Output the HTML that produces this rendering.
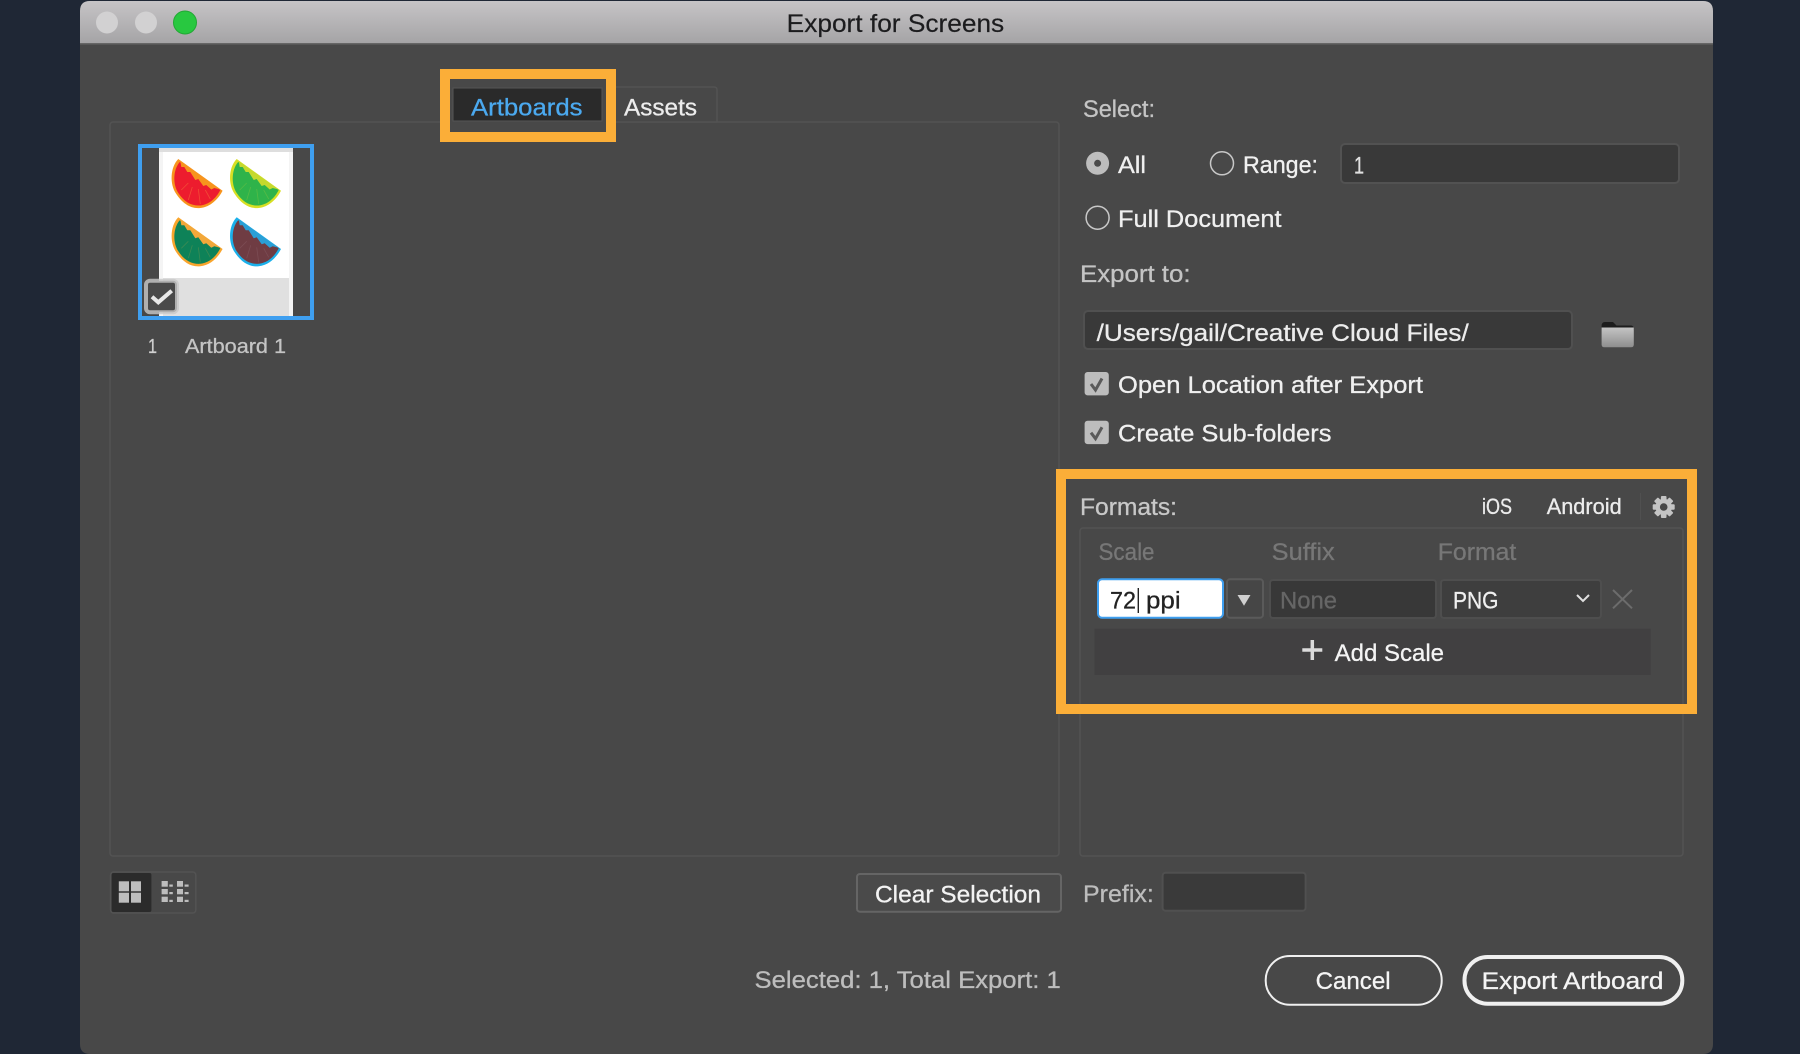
<!DOCTYPE html>
<html lang="en">
<head>
<meta charset="utf-8">
<title>Export for Screens</title>
<style>
html,body{margin:0;padding:0;width:1800px;height:1054px;overflow:hidden;background:#1f2735}
svg{display:block}
text{font-family:"Liberation Sans",sans-serif;font-size:24px;fill:currentColor;stroke:currentColor;stroke-width:.3px}
</style>
</head>
<body>
<svg xmlns="http://www.w3.org/2000/svg" width="1800" height="1054" viewBox="0 0 1800 1054">
<defs>
<linearGradient id="tb" x1="0" y1="0" x2="0" y2="1"><stop offset="0" stop-color="#c6c4c6"/><stop offset="1" stop-color="#a5a4a6"/></linearGradient>
<linearGradient id="fd" x1="0" y1="0" x2="0" y2="1"><stop offset="0" stop-color="#c4c4c4"/><stop offset="1" stop-color="#8e8e8e"/></linearGradient>
</defs>
<rect width="1800" height="1054" fill="#1f2735"/>
<!-- window -->
<path d="M80 1044V11Q80 1 90 1H1703Q1713 1 1713 11V1044Q1713 1054 1703 1054H90Q80 1054 80 1044Z" fill="#484848"/>
<path d="M80 43V11Q80 1 90 1H1703Q1713 1 1713 11V43Z" fill="url(#tb)"/>
<rect x="80" y="43" width="1633" height="1.5" fill="#666"/>
<circle cx="107" cy="22.5" r="11" fill="#d2d1d2"/>
<circle cx="146" cy="22.5" r="11" fill="#d2d1d2"/>
<circle cx="185" cy="22.5" r="11.5" fill="#28c840" stroke="#22a834" stroke-width="1"/>
<text x="786.7" y="32" color="#1c1c1e" style="font-size:25px;stroke-width:.2px" textLength="217.5" lengthAdjust="spacingAndGlyphs">Export for Screens</text>

<!-- left panel -->
<rect x="110" y="122" width="949" height="734" rx="3" fill="#484848" stroke="#535353" stroke-width="1.5"/>
<!-- tabs -->
<path d="M606 87H714Q717 87 717 90V122H606Z" fill="#484848" stroke="#535353" stroke-width="1.5"/>
<rect x="445" y="74" width="166" height="63" fill="#484848" stroke="#fbae38" stroke-width="10"/>
<rect x="453" y="88" width="149" height="33" fill="#2a2a2a" stroke="#555" stroke-width="1"/>
<text x="471" y="115.5" style="font-size:24.5px" color="#4ba9ef" textLength="111.5" lengthAdjust="spacingAndGlyphs">Artboards</text>
<text x="624" y="115.5" style="font-size:24.5px" color="#ececec" textLength="73" lengthAdjust="spacingAndGlyphs">Assets</text>

<!-- thumbnail -->
<rect x="140" y="146" width="172" height="172" fill="#484848" stroke="#3f9ff0" stroke-width="4"/>
<rect x="159" y="148" width="134" height="168" fill="#f4f4f4"/>
<rect x="159" y="148" width="134" height="4" fill="#dedede"/>
<rect x="163" y="152" width="126" height="126" fill="#fff"/>
<rect x="163" y="278" width="126" height="38" fill="#e0e0e0"/>
<g transform="translate(178.3,159)">
<path d="M0 0C-8 8-9 25-2 35C4 44 12 50 22 49C32 48 40 40 44.3 31.7Z" fill="#f7941d"/>
<path d="M1.500 3C-5 10-6 25 0 34C6 43 13 47 22 46.500C31 45.500 38 39 42 31Z" fill="#ed1c2e"/>
<path d="M2 2L42 30.500L36 29L33 30.500L28 26L25 27L20 20L17 21L12 13L9 13L6 8L3 8Z" fill="#f7941d"/>
<path d="M22 45L20 30M10 41L14 28M3 31L10 24M32 40L27 31" stroke="#f36b3b" stroke-width=".8" stroke-opacity=".6" fill="none"/>
</g>
<g transform="translate(236.7,159)">
<path d="M0 0C-8 8-9 25-2 35C4 44 12 50 22 49C32 48 40 40 44.3 31.7Z" fill="#d7df23"/>
<path d="M1.500 3C-5 10-6 25 0 34C6 43 13 47 22 46.500C31 45.500 38 39 42 31Z" fill="#2fb34a"/>
<path d="M2 2L42 30.500L36 29L33 30.500L28 26L25 27L20 20L17 21L12 13L9 13L6 8L3 8Z" fill="#c5d92d"/>
<path d="M22 45L20 30M10 41L14 28M3 31L10 24M32 40L27 31" stroke="#6cbf45" stroke-width=".8" stroke-opacity=".6" fill="none"/>
</g>
<g transform="translate(178.3,217.3)">
<path d="M0 0C-8 8-9 25-2 35C4 44 12 50 22 49C32 48 40 40 44.3 31.7Z" fill="#f9a52c"/>
<path d="M1.500 3C-5 10-6 25 0 34C6 43 13 47 22 46.500C31 45.500 38 39 42 31Z" fill="#0e8258"/>
<path d="M2 2L42 30.500L36 29L33 30.500L28 26L25 27L20 20L17 21L12 13L9 13L6 8L3 8Z" fill="#f2a83a"/>
<path d="M22 45L20 30M10 41L14 28M3 31L10 24M32 40L27 31" stroke="#5a9050" stroke-width=".8" stroke-opacity=".6" fill="none"/>
</g>
<g transform="translate(236.7,217.3)">
<path d="M0 0C-8 8-9 25-2 35C4 44 12 50 22 49C32 48 40 40 44.3 31.7Z" fill="#1bb0ea"/>
<path d="M1.500 3C-5 10-6 25 0 34C6 43 13 47 22 46.500C31 45.500 38 39 42 31Z" fill="#6f3c43"/>
<path d="M2 2L42 30.500L36 29L33 30.500L28 26L25 27L20 20L17 21L12 13L9 13L6 8L3 8Z" fill="#2a9fd6"/>
<path d="M22 45L20 30M10 41L14 28M3 31L10 24M32 40L27 31" stroke="#84575f" stroke-width=".8" stroke-opacity=".6" fill="none"/>
</g>
<rect x="146" y="280.700" width="31" height="31.500" rx="4" fill="#4a4a4a" stroke="#c9c9c9" stroke-opacity=".8" stroke-width="4"/>
<path d="M152 296.700L158.300 302.300L171.700 290.700" fill="none" stroke="#e8e8e8" stroke-width="4"/>
<text x="148" y="353" style="font-size:20.5px" color="#d0d0d0" textLength="9" lengthAdjust="spacingAndGlyphs">1</text>
<text x="185" y="353" style="font-size:20.5px" color="#c4c4c4" textLength="101" lengthAdjust="spacingAndGlyphs">Artboard 1</text>

<!-- select -->
<text x="1083" y="117" color="#c4c4c4" textLength="72" lengthAdjust="spacingAndGlyphs">Select:</text>
<circle cx="1097.600" cy="163.300" r="11.500" fill="#bdbdbd"/>
<circle cx="1097.600" cy="163.300" r="3.500" fill="#4a4a4a"/>
<text x="1118" y="172.800" color="#f0f0f0" textLength="28" lengthAdjust="spacingAndGlyphs">All</text>
<circle cx="1222" cy="163.300" r="11.500" fill="#484848" stroke="#c8c8c8" stroke-width="1.500"/>
<text x="1243" y="172.800" color="#f0f0f0" textLength="75" lengthAdjust="spacingAndGlyphs">Range:</text>
<rect x="1341" y="144" width="338" height="39" rx="4" fill="#393939" stroke="#525252" stroke-width="2"/>
<text x="1354" y="173.500" color="#e0e0e0" textLength="10" lengthAdjust="spacingAndGlyphs">1</text>
<circle cx="1097.600" cy="217.700" r="11.500" fill="#484848" stroke="#c8c8c8" stroke-width="1.500"/>
<text x="1118" y="226.800" color="#f0f0f0" textLength="163.500" lengthAdjust="spacingAndGlyphs">Full Document</text>

<!-- export to -->
<text x="1080" y="282" color="#c4c4c4" textLength="110.500" lengthAdjust="spacingAndGlyphs">Export to:</text>
<rect x="1084" y="311" width="488" height="38" rx="4" fill="#393939" stroke="#505050" stroke-width="2"/>
<text x="1096.700" y="341" color="#ececec" textLength="372" lengthAdjust="spacingAndGlyphs">/Users/gail/Creative Cloud Files/</text>
<path d="M1601.600 326Q1601.600 322 1605 322H1613L1616.500 325.500H1631Q1633.800 325.500 1633.800 329V330H1601.600Z" fill="#1d1d1d"/>
<path d="M1601.600 327.500H1633.800V344.500Q1633.800 347.300 1631 347.300H1604.400Q1601.600 347.300 1601.600 344.500Z" fill="url(#fd)"/>
<rect x="1084.600" y="372" width="24.200" height="23.400" rx="3" fill="#bdbdbd"/>
<path d="M1091 384L1095.500 390L1102 378.500" fill="none" stroke="#5a5a5a" stroke-width="3"/>
<text x="1118" y="392.800" color="#f0f0f0" textLength="305" lengthAdjust="spacingAndGlyphs">Open Location after Export</text>
<rect x="1084.600" y="420.700" width="24.200" height="23.400" rx="3" fill="#bdbdbd"/>
<path d="M1091 432.700L1095.500 438.700L1102 427.200" fill="none" stroke="#5a5a5a" stroke-width="3"/>
<text x="1118" y="441.500" color="#f0f0f0" textLength="213.500" lengthAdjust="spacingAndGlyphs">Create Sub-folders</text>

<!-- formats -->
<rect x="1080" y="528" width="603" height="328" rx="3" fill="#484848" stroke="#535353" stroke-width="1.5"/>
<rect x="1061" y="474" width="631" height="235" fill="none" stroke="#fbae38" stroke-width="10"/>
<text x="1080" y="515" color="#c8c8c8" textLength="97" lengthAdjust="spacingAndGlyphs">Formats:</text>
<text x="1482" y="514" style="font-size:22px" color="#ececec" textLength="30" lengthAdjust="spacingAndGlyphs">iOS</text>
<text x="1546.700" y="514" style="font-size:22px" color="#ececec" textLength="75" lengthAdjust="spacingAndGlyphs">Android</text>
<rect x="1640" y="493" width="1" height="27" fill="#505050"/>
<g transform="translate(1663.700,507)" fill="#c4c4c4">
<rect x="-2.800" y="-11" width="5.600" height="22" rx="1"/>
<rect x="-2.800" y="-11" width="5.600" height="22" rx="1" transform="rotate(45)"/>
<rect x="-2.800" y="-11" width="5.600" height="22" rx="1" transform="rotate(90)"/>
<rect x="-2.800" y="-11" width="5.600" height="22" rx="1" transform="rotate(135)"/>
<circle r="8.200"/>
<circle r="3.800" fill="#484848"/>
</g>
<text x="1098.500" y="560" color="#777" textLength="56" lengthAdjust="spacingAndGlyphs">Scale</text>
<text x="1271.700" y="560" color="#777" textLength="63" lengthAdjust="spacingAndGlyphs">Suffix</text>
<text x="1437.800" y="560" color="#777" textLength="78.500" lengthAdjust="spacingAndGlyphs">Format</text>
<rect x="1098" y="579.300" width="125" height="38.400" rx="4" fill="#fff" stroke="#3f9ff0" stroke-width="2"/>
<text x="1110" y="608.500" color="#222" textLength="26" lengthAdjust="spacingAndGlyphs">72</text>
<rect x="1137.600" y="588" width="1.400" height="25" fill="#222"/>
<text x="1146" y="608.500" color="#222" textLength="34.600" lengthAdjust="spacingAndGlyphs">ppi</text>
<rect x="1227" y="579.300" width="36" height="38.400" rx="3" fill="#464646" stroke="#5a5a5a" stroke-width="2"/>
<path d="M1237.500 595H1250.500L1244 605.700Z" fill="#d0d0d0"/>
<rect x="1270" y="580" width="166" height="38" rx="3" fill="#383838" stroke="#4e4e4e" stroke-width="2"/>
<text x="1280" y="608.500" color="#666" textLength="57" lengthAdjust="spacingAndGlyphs">None</text>
<rect x="1441" y="580" width="160" height="38" rx="3" fill="#3e3e3e" stroke="#4e4e4e" stroke-width="2"/>
<text x="1453" y="608.500" color="#efefef" textLength="45.500" lengthAdjust="spacingAndGlyphs">PNG</text>
<path d="M1577 595L1583 601L1589 595" fill="none" stroke="#e0e0e0" stroke-width="2"/>
<path d="M1613 590L1632 608.300M1632 590L1613 608.300" fill="none" stroke="#6c6c6c" stroke-width="2"/>
<rect x="1094.500" y="628.700" width="556.200" height="46.300" fill="#414041"/>
<path d="M1312.300 640V660M1302.300 650H1322.300" fill="none" stroke="#dcdcdc" stroke-width="3.500"/>
<text x="1334.600" y="661.200" color="#f4f4f4" textLength="109.400" lengthAdjust="spacingAndGlyphs">Add Scale</text>

<!-- bottom row -->
<rect x="110.600" y="872" width="85.200" height="41" rx="3" fill="#484848" stroke="#535353" stroke-width="1.500"/>
<rect x="111.600" y="873" width="39.800" height="39" rx="2" fill="#2b2b2b"/>
<g fill="#bdbdbd">
<rect x="118.800" y="881.300" width="10.200" height="10"/><rect x="131" y="881.300" width="10" height="10"/>
<rect x="118.800" y="892.700" width="10.200" height="10"/><rect x="131" y="892.700" width="10" height="10"/>
<rect x="161.600" y="881" width="6.200" height="5.700"/><rect x="169.300" y="884.500" width="3.500" height="2.200"/><rect x="177" y="881" width="6" height="5.700"/><rect x="184.600" y="884.500" width="4" height="2.200"/>
<rect x="161.600" y="889" width="6.200" height="5.300"/><rect x="169.300" y="892" width="3.500" height="2.200"/><rect x="177" y="889" width="6" height="5.300"/><rect x="184.600" y="892" width="4" height="2.200"/>
<rect x="161.600" y="896.700" width="6.200" height="5.300"/><rect x="169.300" y="899.800" width="3.500" height="2.200"/><rect x="177" y="896.700" width="6" height="5.300"/><rect x="184.600" y="899.800" width="4" height="2.200"/>
</g>
<rect x="857" y="874" width="204" height="37.700" rx="3" fill="#4a4a4a" stroke="#656565" stroke-width="2"/>
<text x="875" y="902.300" color="#f2f2f2" textLength="166" lengthAdjust="spacingAndGlyphs">Clear Selection</text>
<text x="1083" y="902" color="#bdbdbd" textLength="70.800" lengthAdjust="spacingAndGlyphs">Prefix:</text>
<rect x="1162.600" y="872.700" width="143" height="38" rx="3" fill="#3a3a3a" stroke="#505050" stroke-width="2"/>
<text x="754.500" y="987.800" color="#bdbdbd" textLength="306.300" lengthAdjust="spacingAndGlyphs">Selected: 1, Total Export: 1</text>
<rect x="1265.700" y="956" width="176" height="48.700" rx="24" fill="#484848" stroke="#f0f0f0" stroke-width="2"/>
<text x="1315.600" y="989" color="#f4f4f4" textLength="75" lengthAdjust="spacingAndGlyphs">Cancel</text>
<rect x="1464.500" y="957" width="217.800" height="46.700" rx="23" fill="#484848" stroke="#f0f0f0" stroke-width="4"/>
<text x="1481.700" y="989" color="#f4f4f4" textLength="181.700" lengthAdjust="spacingAndGlyphs">Export Artboard</text>
</svg>
</body>
</html>
